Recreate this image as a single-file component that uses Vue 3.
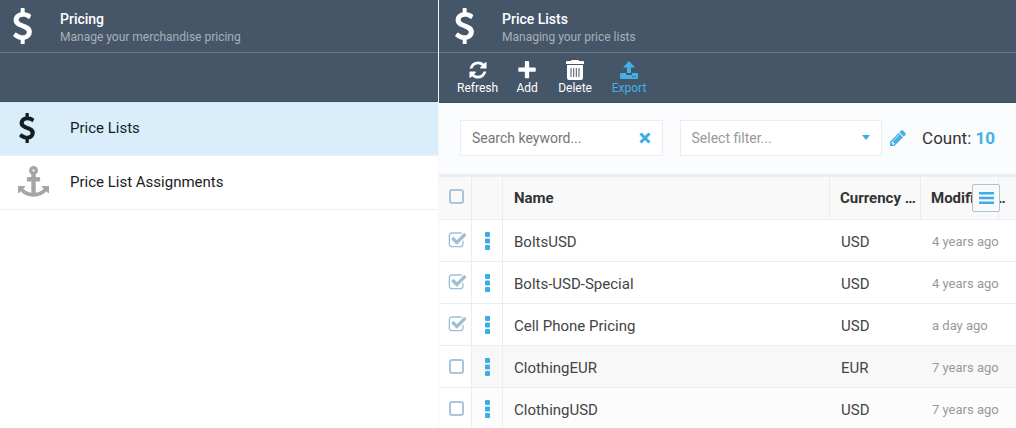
<script setup>
import { ref, computed } from 'vue'

const usd = 'M978 1185q0 153-99.5 263.5t-258.5 136.5v175q0 14-9 23t-23 9h-135q-13 0-22.5-9.5t-9.5-22.5v-175q-66-9-127.5-31t-101.5-44.5-74-48-46.5-37.5-17.5-18q-17-21-2-41l103-135q7-10 23-12 15-2 24 9l2 2q113 99 243 125 37 8 74 8 81 0 142.5-43t61.5-122q0-28-15-53t-33.5-42-58.5-37.5-66-32-80-32.5q-39-16-61.5-25t-61.5-26.5-62.5-31-56.5-35.5-53.5-42.5-43.5-49-35.5-58-21-66.5-8.5-78q0-138 98-242t255-134v-180q0-13 9.5-22.5t22.5-9.5h135q14 0 23 9t9 23v176q57 6 110.5 23t87 33.5 63.5 37.5 39 29 15 14q17 18 5 38l-81 146q-8 15-23 16-14 3-27-7-3-3-14.5-12t-39-26.5-58.5-32-74.5-26-85.5-11.5q-95 0-155 43t-60 111q0 26 8.5 48t29.5 41.5 39.5 33 56 31 60.5 27 70 27.5q53 20 81 31.5t76 35 75.5 42.5 62 50 53 63.5 31.5 76.5 13 94z'

const keyword = ref('')
const filter = ref('')
const total = ref(10)
const rows = ref([
  { name: 'BoltsUSD', currency: 'USD', modified: '4 years ago', picked: true },
  { name: 'Bolts-USD-Special', currency: 'USD', modified: '4 years ago', picked: true },
  { name: 'Cell Phone Pricing', currency: 'USD', modified: 'a day ago', picked: true },
  { name: 'ClothingEUR', currency: 'EUR', modified: '7 years ago', picked: false, hover: true },
  { name: 'ClothingUSD', currency: 'USD', modified: '7 years ago', picked: false, alt: true },
])
const allPicked = computed({
  get: () => rows.value.every((r) => r.picked),
  set: (v) => rows.value.forEach((r) => { r.picked = v }),
})
</script>

<template>
  <div class="app">
    <section class="blade">
      <header class="head">
        <svg class="head-icon" viewBox="0 0 1024 1792"><path :d="usd" /></svg>
        <div>
          <h1 class="title">Pricing</h1>
          <p class="subtitle">Manage your merchandise pricing</p>
        </div>
      </header>
      <div class="toolbar"></div>
      <nav class="menu">
        <a class="menu-item active" href="#price-lists">
          <svg class="menu-usd" viewBox="0 0 1024 1792"><path :d="usd" /></svg>
          <span>Price Lists</span>
        </a>
        <a class="menu-item" href="#assignments">
          <svg class="menu-anchor" viewBox="0 0 1792 1792"><path d="M960 256q0-26-19-45t-45-19-45 19-19 45 19 45 45 19 45-19 19-45zm832 928v352q0 22-20 30-8 2-12 2-13 0-23-9l-93-93q-119 143-318.5 226.5t-429.5 83.5-429.5-83.5-318.5-226.5l-93 93q-9 9-23 9-4 0-12-2-20-8-20-30v-352q0-14 9-23t23-9h352q22 0 30 20 8 19-7 35l-100 100q67 91 189.5 153.5t271.5 82.500v-647h-192q-26 0-45-19t-19-45v-128q0-26 19-45t45-19h192v-163q-58-34-93-92.5t-35-128.5q0-106 75-181t181-75 181 75 75 181q0 70-35 128.5t-93 92.5v163h192q26 0 45 19t19 45v128q0 26-19 45t-45 19h-192v647q149-20 271.5-82.5t189.5-153.5l-100-100q-15-16-7-35 8-20 30-20h352q14 0 23 9t9 23z" /></svg>
          <span>Price List Assignments</span>
        </a>
      </nav>
    </section>

    <section class="blade wide">
      <header class="head">
        <svg class="head-icon" viewBox="0 0 1024 1792"><path :d="usd" /></svg>
        <div>
          <h2 class="title">Price Lists</h2>
          <p class="subtitle">Managing your price lists</p>
        </div>
      </header>
      <div class="toolbar">
        <button class="tool" type="button">
          <svg viewBox="0 0 1792 1792"><path d="M1639 1056q0 5-1 7-64 268-268 434.5t-478 166.5q-146 0-282.5-55t-243.5-157l-129 129q-19 19-45 19t-45-19-19-45v-448q0-26 19-45t45-19h448q26 0 45 19t19 45-19 45l-137 137q71 66 161 102t187 36q134 0 250-65t186-179q11-17 53-117 8-23 30-23h192q13 0 22.5 9.5t9.5 22.5zm25-800v448q0 26-19 45t-45 19h-448q-26 0-45-19t-19-45 19-45l138-138q-148-137-349-137-134 0-250 65t-186 179q-11 17-53 117-8 23-30 23h-199q-13 0-22.5-9.5t-9.5-22.5v-7q65-268 270-434.5t480-166.5q146 0 284 55.5t245 156.5l130-129q19-19 45-19t45 19 19 45z" /></svg>
          Refresh
        </button>
        <button class="tool" type="button">
          <svg viewBox="0 0 1792 1792"><path d="M1680 768v192q0 40-28 68t-68 28h-496v484q0 40-28 68t-68 28h-192q-40 0-68-28t-28-68v-484h-496q-40 0-68-28t-28-68v-192q0-40 28-68t68-28h496v-496q0-40 28-68t68-28h192q40 0 68 28t28 68v496h496q40 0 68 28t28 68z" /></svg>
          Add
        </button>
        <button class="tool" type="button">
          <svg viewBox="0 0 20 20"><path fill-rule="evenodd" d="M7 0h6q1 0 1 1h4q1 0 1 1v2H1V2q0-1 1-1h4q0-1 1-1zM2 5h16v13q0 2-2 2H4q-2 0-2-2zM5.500 8v9h1v-9zM8.200 8v9h1v-9zM10.800 8v9h1v-9zM13.500 8v9h1v-9z" /></svg>
          Delete
        </button>
        <button class="tool busy" type="button">
          <svg viewBox="0 0 20 20"><path fill-rule="evenodd" d="M10 1l6 6.500h-4V13H8V7.500H4zM2 13h5v1q0 1 1 1h4q1 0 1-1v-1h5q1 0 1 1v4q0 1-1 1H2q-1 0-1-1v-4q0-1 1-1zM13 16v1.200h1.200V16zM15.500 16v1.200h1.200V16z" /></svg>
          Export
        </button>
      </div>

      <div class="filters">
        <div class="field">
          <input v-model="keyword" class="control" type="text" placeholder="Search keyword..." aria-label="Search keyword" />
          <button class="clear" type="button" aria-label="Clear" @click="keyword = ''">
            <svg viewBox="0 0 14 14"><path d="M2.500 2.500l9 9M11.500 2.500l-9 9" /></svg>
          </button>
        </div>
        <div class="field">
          <select v-model="filter" class="control select" aria-label="Filter">
            <option value="">Select filter...</option>
          </select>
          <svg class="caret" viewBox="0 0 8 5"><path d="M0 0h8l-4 5z" /></svg>
        </div>
        <button class="edit" type="button" aria-label="Edit filter">
          <svg viewBox="128 128 1536 1536"><path d="M491 1536l91-91-235-235-91 91v107h128v128h107zm523-928q0-22-22-22-10 0-17 7l-542 542q-7 7-7 17 0 22 22 22 10 0 17-7l542-542q7-7 7-17zm-54-192l416 416-832 832h-416v-416zm683 96q0 53-37 90l-166 166-416-416 166-165q36-38 90-38 53 0 91 38l235 234q37 39 37 91z" /></svg>
        </button>
        <p class="count">Count: <b>{{ total }}</b></p>
      </div>

      <div class="grid">
        <table>
          <colgroup>
            <col class="c-check" /><col class="c-act" /><col /><col class="c-cur" /><col class="c-mod" /><col class="c-end" />
          </colgroup>
          <thead>
            <tr>
              <th class="pick"><label class="box"><input v-model="allPicked" type="checkbox" aria-label="Select all" /></label></th>
              <th></th>
              <th>Name</th>
              <th class="short">Currency …</th>
              <th class="short">Modified …</th>
              <th></th>
            </tr>
          </thead>
          <tbody>
            <tr v-for="row in rows" :key="row.name" :class="{ hover: row.hover, alt: row.alt }">
              <td class="pick">
                <label class="box">
                  <input v-model="row.picked" type="checkbox" :aria-label="row.name" />
                  <svg v-if="row.picked" viewBox="0 0 1792 1792"><path d="M1472 930v318q0 119-84.5 203.5t-203.5 84.500h-832q-119 0-203.500-84.500t-84.500-203.500v-832q0-119 84.500-203.500t203.500-84.500h832q63 0 117 25 15 7 18 23 3 17-9 29l-49 49q-10 10-23 10-3 0-9-2-23-6-45-6h-832q-66 0-113 47t-47 113v832q0 66 47 113t113 47h832q66 0 113-47t47-113v-254q0-13 9-22l64-64q10-10 23-10 6 0 12 3 20 8 20 29zm231-489l-814 814q-24 24-57 24t-57-24l-430-430q-24-24-24-57t24-57l110-110q24-24 57-24t57 24l263 263 647-647q24-24 57-24t57 24l110 110q24 24 24 57t-24 57z" /></svg>
                </label>
              </td>
              <td class="act">
                <button class="dots" type="button" aria-label="Row actions">
                  <svg viewBox="0 0 5 18"><rect width="5" height="5" rx="1" /><rect y="6.500" width="5" height="5" rx="1" /><rect y="13" width="5" height="5" rx="1" /></svg>
                </button>
              </td>
              <td>{{ row.name }}</td>
              <td>{{ row.currency }}</td>
              <td class="ago" colspan="2">{{ row.modified }}</td>
            </tr>
          </tbody>
        </table>
        <button class="columns" type="button" aria-label="Columns">
          <svg viewBox="0 0 15 12"><path d="M0 0h15v2.500H0zM0 4.800h15v2.500H0zM0 9.500h15v2.500H0z" /></svg>
        </button>
      </div>
    </section>
  </div>
</template>

<style>
body {
  margin: 0;
  background: #fff;
}
</style>

<style scoped>
* {
  box-sizing: border-box;
}
.app {
  display: grid;
  grid-template-columns: 438px minmax(0, 1fr);
  column-gap: 1px;
  height: 100vh;
  overflow: hidden;
  background: #f4f6f9;
  font-family: Roboto, "Liberation Sans", sans-serif;
  color: #161d25;
}
.blade {
  min-width: 0;
  background: #fff;
}
button {
  padding: 0;
  border: 0;
  background: none;
  font: inherit;
  color: inherit;
  cursor: pointer;
}
svg {
  display: block;
  fill: currentColor;
}
.head {
  display: flex;
  align-items: center;
  height: 53px;
  padding-left: 11px;
  gap: 26px;
  background: #465669;
  border-bottom: 1px solid #6d7883;
  color: #fff;
}
.wide .head {
  padding-left: 14px;
}
.head-icon {
  width: 23px;
  height: 36px;
}
.title {
  margin: 0;
  padding-top: 3px;
  font-size: 14px;
  line-height: 18px;
  font-weight: 500;
}
.subtitle {
  margin: 0;
  font-size: 12px;
  line-height: 18px;
  color: #a9afb5;
}
.toolbar {
  display: flex;
  gap: 10px;
  height: 49px;
  padding: 7px 18px 0;
  background: #465669;
  border-bottom: 1px solid #3f4d5e;
  color: #fff;
}
.wide .toolbar {
  height: 50px;
}
.tool {
  display: flex;
  flex-direction: column;
  align-items: center;
  height: 36px;
  font-size: 12px;
  line-height: 16px;
  min-width: 38px;
}
.tool svg {
  width: 20px;
  height: 20px;
}
.busy {
  margin-left: 6px;
  color: #43b0e6;
}
.menu-item {
  display: flex;
  align-items: center;
  height: 54px;
  padding: 0 18px 2px;
  border-bottom: 1px solid #eef0f2;
  color: #161d25;
  font-size: 15px;
  font-weight: 400;
  text-decoration: none;
}
.active {
  background: #d9eefa;
}
.menu-item span {
  margin-left: 21px;
}
.menu-usd {
  width: 18px;
  height: 30px;
  margin-right: 13px;
}
.menu-anchor {
  width: 31px;
  height: 31px;
  color: #a5a5a5;
}
.filters {
  display: flex;
  align-items: center;
  height: 71px;
  padding: 0 21px 1px;
  background: #fbfcfe;
}
.field {
  position: relative;
  flex: 0 1 203px;
  margin-right: 17px;
}
.control {
  display: block;
  width: 100%;
  height: 36px;
  padding: 0 36px 0 11px;
  border: 1px solid #eaedf3;
  border-radius: 0;
  outline: 0;
  background: #fff;
  font: 14px/20px Roboto, "Liberation Sans", sans-serif;
  color: #333;
}
.control::placeholder {
  color: #757575;
  opacity: 1;
}
.select {
  appearance: none;
  color: #999;
}
.clear {
  position: absolute;
  right: 11px;
  top: 11px;
  color: #3dade8;
}
.clear svg {
  width: 14px;
  height: 14px;
  stroke: currentColor;
  stroke-width: 3;
}
.caret {
  position: absolute;
  right: 12px;
  top: 15px;
  width: 8px;
  height: 5px;
  color: #3dade8;
  pointer-events: none;
}
.edit {
  margin-left: -9px;
  color: #43b0e6;
}
.edit svg {
  width: 16px;
  height: 16px;
}
.count {
  margin: 0 0 0 16px;
  font-size: 17px;
  line-height: 20px;
  font-weight: 400;
  white-space: nowrap;
  color: #333;
}
.count b {
  color: #43b0e6;
  font-weight: 700;
}
.grid {
  position: relative;
  border-top: 3px solid #e9edf3;
}
table {
  width: 100%;
  table-layout: fixed;
  border-collapse: separate;
  border-spacing: 0;
}
.c-check {
  width: 33px;
}
.c-act {
  width: 31px;
}
.c-cur {
  width: 91px;
}
.c-mod {
  width: 78px;
}
.c-end {
  width: 17px;
}
th,
td {
  height: 42px;
  padding: 2px 0 0 11px;
  overflow: hidden;
  text-align: left;
  text-overflow: ellipsis;
  white-space: nowrap;
  font-size: 15px;
  line-height: 20px;
  font-weight: 400;
  color: #444;
  border-bottom: 1px solid #eaedf3;
}
th {
  height: 43px;
  padding-top: 0;
  font-weight: 700;
  color: #333;
  background: #f9f9f9;
  border-right: 1px solid #eaedf3;
}
th:last-child {
  border-right: 0;
}
td:nth-child(-n + 2) {
  border-right: 1px solid #eaedf3;
}
.hover td:not(.pick) {
  background: #f8f8f8;
}
.alt td:not(.pick) {
  background: #fcfcfc;
}
.short {
  padding-left: 10px;
  overflow: visible;
}
.pick {
  padding: 0 0 0 10px;
}
th.pick {
  padding-bottom: 4px;
}
.act {
  padding: 0 0 0 13px;
}
.box {
  display: block;
  position: relative;
  width: 18px;
  height: 15px;
}
.box input {
  display: block;
  appearance: none;
  width: 15px;
  height: 15px;
  margin: 0;
  border: 2px solid #a9c5d9;
  border-radius: 3px;
}
.box input:checked {
  border-color: transparent;
}
.box svg {
  position: absolute;
  left: -1px;
  top: -2px;
  width: 19px;
  height: 19px;
  color: #9fbfd5;
  pointer-events: none;
}
.dots {
  display: block;
  color: #3dade8;
}
.dots svg {
  width: 5px;
  height: 18px;
}
td.ago {
  font-size: 13px;
  color: #999;
}
.columns {
  position: absolute;
  top: 7px;
  right: 16px;
  display: grid;
  place-items: center;
  width: 28px;
  height: 28px;
  border: 1px solid #a9c5d9;
  border-radius: 2px;
  background: #f9f9f9;
  color: #3dade8;
}
.columns svg {
  width: 15px;
  height: 12px;
}
</style>
